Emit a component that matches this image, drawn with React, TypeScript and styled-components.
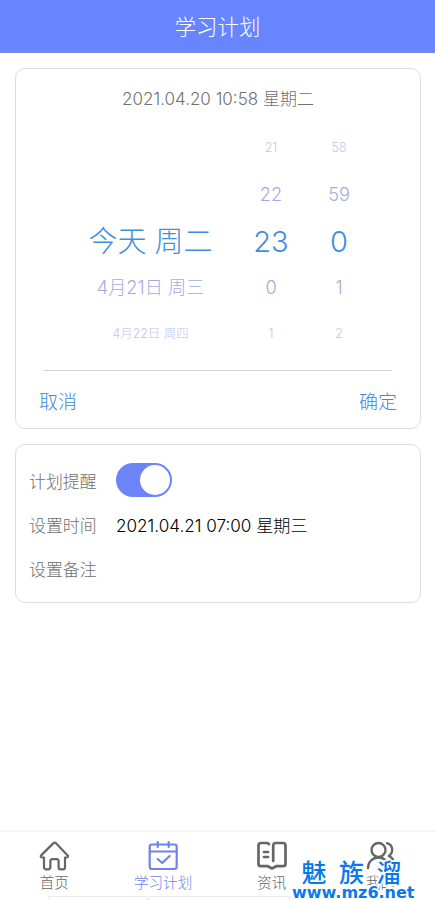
import React from "react";
import styled, { createGlobalStyle } from "styled-components";

const GlobalStyle = createGlobalStyle`
  * { box-sizing: border-box; }
  html, body { margin: 0; background: #fff; }
  body { overflow: hidden; font-family: Inter, "Noto Sans CJK SC", sans-serif; font-weight: 300; }
  button { font: inherit; border: 0; padding: 0; background: none; }
`;

const Screen = styled.div`
  position: relative;
  width: 435px;
  height: 900px;
  display: flex;
  flex-direction: column;
  overflow: hidden;
  white-space: nowrap;
`;

const Header = styled.header`
  height: 53px;
  flex: none;
  display: flex;
  align-items: center;
  justify-content: center;
  padding-bottom: 2px;
  background: #6685ff;
  border-bottom: 1px solid #7e8bd0;
  color: #fff;
  font-size: 21.4px;
`;

const Content = styled.main`
  flex: 1;
  display: flex;
  flex-direction: column;
  gap: 15px;
  padding: 15px 14px 0 15px;
`;

const Card = styled.section<{ $height: number }>`
  height: ${(p) => p.$height}px;
  flex: none;
  border: 1px solid #dedee0;
  border-radius: 10px;
  display: flex;
  flex-direction: column;
`;

const CurrentTime = styled.div`
  height: 61px;
  line-height: 60px;
  text-align: center;
  font-size: 17px;
  color: #707070;
`;

const Wheel = styled.div`
  display: grid;
  grid-template-columns: 135px 106px 30px;
  justify-content: start;
  padding-left: 67px;
  margin-top: -5px;
`;

const wheelStyles = {
  far: { size: 12.4, color: "#bfc4ea", nudge: 2 },
  near: { size: 18.2, color: "#a3abe2", nudge: 0 },
  active: { size: 29, color: "#3f8ee0", nudge: 3 },
};
type Level = keyof typeof wheelStyles;

const WheelItem = styled.div<{ $level: Level }>`
  height: 46.5px;
  display: flex;
  align-items: center;
  justify-content: center;
  line-height: 1;
  padding-top: ${(p) => wheelStyles[p.$level].nudge}px;
  font-size: ${(p) => wheelStyles[p.$level].size}px;
  color: ${(p) => wheelStyles[p.$level].color};
`;

const Divider = styled.div`
  height: 1px;
  margin: 13px 28px 0 27px;
  background: #d5d5d7;
`;

const Actions = styled.div`
  display: flex;
  justify-content: space-between;
  padding: 2px 23px 0;
  height: 61px;
`;

const Action = styled.button`
  font-size: 19px;
  color: #3f87d6;
`;

const Setting = styled.div`
  height: 44px;
  display: grid;
  grid-template-columns: 86.5px 1fr;
  align-items: center;
  font-size: 16.9px;
  color: #707070;
`;

const Settings = styled.div`
  padding: 13px 13px;
`;

const Value = styled.span`
  padding-left: 0.5px;
  color: #000;
  font-size: 17.1px;
`;

const Toggle = styled.div`
  width: 56px;
  height: 34px;
  border-radius: 17px;
  padding: 2px;
  display: flex;
  justify-content: flex-end;
  align-items: center;
  background: #6b84f8;
`;

const Knob = styled.div`
  width: 30px;
  height: 30px;
  border-radius: 50%;
  background: #fff;
`;

const TabBar = styled.nav`
  height: 70px;
  flex: none;
  border-top: 2px solid #f5f5f5;
  display: grid;
  grid-template-columns: repeat(4, 108.75px);
`;

const Tab = styled.div<{ $active?: boolean }>`
  display: flex;
  flex-direction: column;
  align-items: center;
  padding-top: 8px;
  font-size: 14.6px;
  line-height: 22px;
  color: ${(p) => (p.$active ? "#6f84e8" : "#666")};
  svg { display: block; }
`;

const PageEdge = styled.div`
  position: absolute;
  left: 48px;
  top: 896px;
  width: 242px;
  height: 4px;
  display: grid;
  grid-template-columns: 100px 1fr;
  gap: 1px;
`;

const EdgePart = styled.div`
  border: 1px solid #ececec;
  border-bottom: 0;
`;

const Watermark = styled.div`
  position: absolute;
  left: 290px;
  top: 858px;
  width: 130px;
  color: #0878ee;
  text-shadow: 1px 1px #fff, -1px 1px #fff, 1px -1px #fff, -1px -1px #fff, 2px 0 #fff, -2px 0 #fff, 0 2px #fff, 0 -2px #fff;
`;

const MarkName = styled.div`
  display: flex;
  gap: 12.5px;
  padding-left: 11.5px;
  height: 28px;
  line-height: 27px;
  font-family: "Noto Sans CJK SC", sans-serif;
  font-weight: 500;
  font-size: 25px;
`;

const MarkSite = styled.div`
  padding-left: 2px;
  line-height: 14px;
  font-family: "DejaVu Sans", sans-serif;
  font-weight: 700;
  font-size: 16px;
`;

const Icon = ({ children }: { children: React.ReactNode }) => (
  <svg width="32" height="32" viewBox="0 0 32 32" fill="none" stroke="currentColor" strokeWidth="2.2" strokeLinecap="round" strokeLinejoin="round">
    {children}
  </svg>
);

const wheelRows: { level: Level; cells: string[] }[] = [
  { level: "far", cells: ["", "21", "58"] },
  { level: "near", cells: ["", "22", "59"] },
  { level: "active", cells: ["今天 周二", "23", "0"] },
  { level: "near", cells: ["4月21日 周三", "0", "1"] },
  { level: "far", cells: ["4月22日 周四", "1", "2"] },
];

export default function App() {
  return (
    <Screen>
      <GlobalStyle />
      <Header>学习计划</Header>
      <Content>
        <Card $height={361}>
          <CurrentTime>2021.04.20 10:58 星期二</CurrentTime>
          <Wheel>
            {wheelRows.flatMap((row, r) =>
              row.cells.map((cell, c) => (
                <WheelItem key={`${r}-${c}`} $level={row.level}>{cell}</WheelItem>
              ))
            )}
          </Wheel>
          <Divider />
          <Actions>
            <Action>取消</Action>
            <Action>确定</Action>
          </Actions>
        </Card>
        <Card $height={159}>
          <Settings>
            <Setting>
              计划提醒
              <Toggle><Knob /></Toggle>
            </Setting>
            <Setting>
              设置时间
              <Value>2021.04.21 07:00 星期三</Value>
            </Setting>
            <Setting>设置备注</Setting>
          </Settings>
        </Card>
      </Content>
      <TabBar>
        <Tab>
          <Icon>
            <path d="M6 17.5v9.7a2.1 2.1 0 0 0 2.1 2.1h2.2a2.1 2.1 0 0 0 2.1-2.1v-6.4a1.6 1.6 0 0 1 1.6-1.6h5a1.6 1.6 0 0 1 1.6 1.6v6.4a2.1 2.1 0 0 0 2.1 2.1h2.2a2.1 2.1 0 0 0 2.1-2.1v-9.7h1.9a1.2 1.2 0 0 0 .8-2.1L18.2 3.4a2.2 2.2 0 0 0-3 0L3.1 15.4a1.2 1.2 0 0 0 .8 2.1Z" />
          </Icon>
          首页
        </Tab>
        <Tab $active>
          <Icon>
            <rect x="2.7" y="4.5" width="27" height="24.5" rx="2.2" />
            <path d="M2.7 11.5h27M10.7 2v5M21.7 2v5M10.7 19l4.5 4 7.5-7" />
          </Icon>
          学习计划
        </Tab>
        <Tab>
          <Icon>
            <g strokeWidth="2.7">
              <path d="M13 4.2C12.6 3.4 12 3 11 3H5a2.5 2.5 0 0 0-2.5 2.5v18.2A2.5 2.5 0 0 0 5 26.2h6.8l4.2 2.3 4.2-2.3H27a2.5 2.5 0 0 0 2.5-2.5V5.5A2.5 2.5 0 0 0 27 3h-7.3a2.5 2.5 0 0 0-2.5 2.5V21" />
              <path d="M8 12h4M8 17h4" />
            </g>
          </Icon>
          资讯
        </Tab>
        <Tab>
          <Icon>
            <g strokeWidth="2.4">
              <circle cx="13.5" cy="10" r="7" />
              <path d="M3 28c0-6 4.5-10.5 10.5-10.5S24 22 24 28M22 3.2c6 1.5 7 9.5 1.8 12.7 3.8 1.8 5.4 5.4 5.4 9.3" />
            </g>
          </Icon>
          我的
        </Tab>
      </TabBar>
      <PageEdge><EdgePart /><EdgePart /></PageEdge>
      <Watermark>
        <MarkName><span>魅</span><span>族</span><span>溜</span></MarkName>
        <MarkSite>www.mz6.net</MarkSite>
      </Watermark>
    </Screen>
  );
}
